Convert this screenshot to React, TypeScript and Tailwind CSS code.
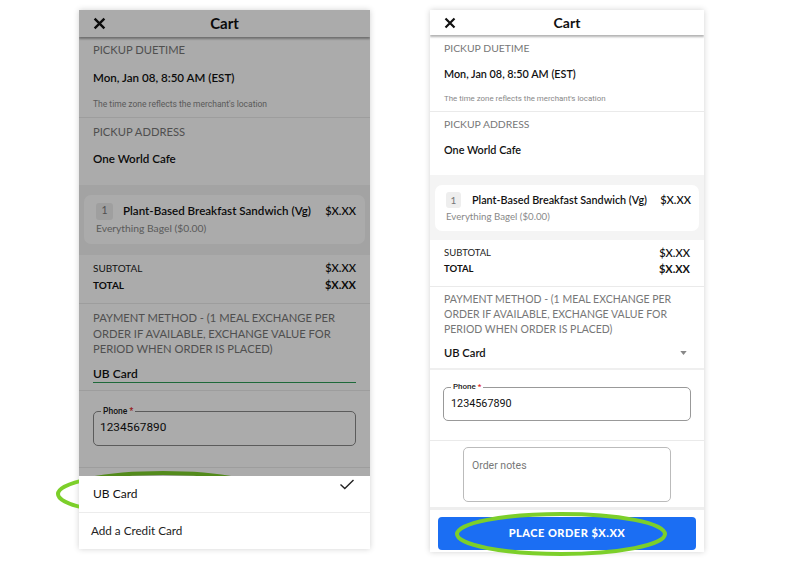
import React from "react";

function XIcon({ size }: { size: number }) {
  return (
    <svg width={size} height={size} viewBox="0 0 12 12" fill="none">
      <path d="M1.5 1.5 L10.5 10.5 M10.5 1.5 L1.5 10.5" stroke="#111" strokeWidth="2.2" strokeLinecap="butt" />
    </svg>
  );
}

function LeftPhone() {
  return (
    <div className="relative w-[291px] h-[539px] shrink-0 overflow-hidden bg-white shadow-[0_0_6px_rgba(0,0,0,0.18)]">
      <div className="relative z-10 grid h-[27px] grid-cols-[40px_1fr_40px] items-center bg-white shadow-[0_2px_2px_rgba(0,0,0,0.35)]">
        <div className="pl-[14px] flex items-center">
          <XIcon size={13} />
        </div>
        <div className="text-center text-[15px] font-bold text-[#111]">Cart</div>
        <div />
      </div>
      <div className="border-b border-[#eaeaea] px-[14px]">
        <div className="flex h-[27px] items-center text-[11.2px] text-[#777]">PICKUP DUETIME</div>
        <div className="flex h-[28px] items-center text-[11.6px] font-semibold text-[#111]">Mon, Jan 08, 8:50 AM (EST)</div>
        <div className="flex h-[25px] items-center whitespace-nowrap font-['Roboto',sans-serif] text-[8.5px] text-[#888]">The time zone reflects the merchant's location</div>
      </div>
      <div className="px-[14px] pb-[13px]">
        <div className="flex h-[28px] items-center text-[11.2px] text-[#777]">PICKUP ADDRESS</div>
        <div className="flex h-[26px] items-center text-[11.6px] font-semibold text-[#111]">One World Cafe</div>
      </div>
      <div className="bg-[#f4f4f4] px-[5px] pt-[10px] pb-[11px]">
        <div className="h-[49px] rounded-[7px] bg-white pt-[7px] pr-[9px] pl-[12px]">
          <div className="flex h-[18px] items-center whitespace-nowrap">
            <div className="flex h-[17px] w-[17px] items-center justify-center rounded-[3px] bg-[#eeeeee] text-[10.5px] text-[#777]">1</div>
            <div className="ml-[10px] flex-1 text-[11.6px] font-semibold text-[#111]">Plant-Based Breakfast Sandwich (Vg)</div>
            <div className="text-[11px] font-semibold text-[#111]">$X.XX</div>
          </div>
          <div className="mt-[2px] flex h-[14px] items-center text-[10.3px] text-[#888]">Everything Bagel ($0.00)</div>
        </div>
      </div>
      <div className="border-b border-[#eaeaea] px-[14px] pt-[5px] pb-[9px]">
        <div className="flex h-[17px] items-center justify-between">
          <span className="text-[10px] text-[#222]">SUBTOTAL</span>
          <span className="text-[11px] font-semibold text-[#111]">$X.XX</span>
        </div>
        <div className="flex h-[17px] items-center justify-between">
          <span className="text-[10px] font-bold text-[#111]">TOTAL</span>
          <span className="text-[11px] font-bold text-[#111]">$X.XX</span>
        </div>
      </div>
      <div className="border-b border-[#eaeaea] px-[14px] pt-[6px] pb-[7px]">
        <div className="whitespace-nowrap text-[11.2px] leading-[15.5px] text-[#777]">
          PAYMENT METHOD - (1 MEAL EXCHANGE PER
          <br />
          ORDER IF AVAILABLE, EXCHANGE VALUE FOR
          <br />
          PERIOD WHEN ORDER IS PLACED)
        </div>
        <div className="mt-[9px] flex h-[17px] items-center border-b-[1.5px] border-[#2e9d57] text-[12px] font-semibold text-[#111]">UB Card</div>
      </div>
      <div className="border-b border-[#eaeaea] px-[14px] pt-[20px] pb-[21px]">
        <div className="relative h-[35px] rounded-[5px] border border-[#888] pl-[6px] flex items-center">
          <div className="absolute left-[7px] top-[-6px] bg-white px-[2px] font-['Roboto',sans-serif] text-[8.5px] font-medium leading-[10px] text-[#222]">
            Phone <span className="text-[#e02020]">*</span>
          </div>
          <span className="font-['Roboto',sans-serif] text-[11.8px] text-[#111]">1234567890</span>
        </div>
      </div>
      <div className="absolute inset-0 z-20 bg-black/[0.33]" />
      <div className="absolute bottom-0 left-0 right-0 z-30 h-[73px] bg-white">
        <div className="relative flex h-[37px] items-center border-b border-[#ececec] pl-[14px] text-[12px] text-[#111]">
          UB Card
          <svg className="absolute right-[15px] top-[3px]" width="16" height="11" viewBox="0 0 16 11" fill="none">
            <path d="M1.5 5.5 L5.8 9.5 L14.5 1" stroke="#222" strokeWidth="1.4" />
          </svg>
        </div>
        <div className="flex h-[35px] items-center pl-[12px] text-[11.7px] text-[#222]">Add a Credit Card</div>
      </div>
    </div>
  );
}

function RightPhone() {
  return (
    <div className="relative w-[274px] h-[542px] shrink-0 overflow-hidden bg-white shadow-[0_0_6px_rgba(0,0,0,0.18)]">
      <div className="relative z-10 grid h-[25px] grid-cols-[40px_1fr_40px] items-center bg-white shadow-[0_2px_2px_rgba(0,0,0,0.3)]">
        <div className="pl-[14px] flex items-center">
          <XIcon size={12} />
        </div>
        <div className="text-center text-[14px] font-bold text-[#111]">Cart</div>
        <div />
      </div>
      <div className="border-b border-[#eaeaea] px-[14px] pt-[1px]">
        <div className="flex h-[26px] items-center text-[10.4px] text-[#777]">PICKUP DUETIME</div>
        <div className="flex h-[24px] items-center text-[10.8px] font-semibold text-[#111]">Mon, Jan 08, 8:50 AM (EST)</div>
        <div className="flex h-[25px] items-center whitespace-nowrap font-['Roboto',sans-serif] text-[7.9px] text-[#888]">The time zone reflects the merchant's location</div>
      </div>
      <div className="px-[14px] pb-[12px]">
        <div className="flex h-[26px] items-center text-[10.4px] text-[#777]">PICKUP ADDRESS</div>
        <div className="flex h-[25px] items-center text-[10.8px] font-semibold text-[#111]">One World Cafe</div>
      </div>
      <div className="bg-[#f4f4f4] px-[5px] pt-[10px] pb-[9px]">
        <div className="h-[46px] rounded-[7px] bg-white pt-[7px] pr-[8px] pl-[11px]">
          <div className="flex h-[16px] items-center whitespace-nowrap">
            <div className="flex h-[16px] w-[15px] items-center justify-center rounded-[3px] bg-[#eeeeee] text-[10px] text-[#777]">1</div>
            <div className="ml-[11px] flex-1 text-[10.8px] font-semibold text-[#111]">Plant-Based Breakfast Sandwich (Vg)</div>
            <div className="text-[11px] font-semibold text-[#111]">$X.XX</div>
          </div>
          <div className="mt-[2px] flex h-[13px] items-center text-[9.7px] text-[#888]">Everything Bagel ($0.00)</div>
        </div>
      </div>
      <div className="border-b border-[#eaeaea] px-[14px] pt-[5px] pb-[9px]">
        <div className="flex h-[16px] items-center justify-between">
          <span className="text-[9.5px] text-[#222]">SUBTOTAL</span>
          <span className="text-[11px] font-semibold text-[#111]">$X.XX</span>
        </div>
        <div className="flex h-[16px] items-center justify-between">
          <span className="text-[9.5px] font-bold text-[#111]">TOTAL</span>
          <span className="text-[11px] font-bold text-[#111]">$X.XX</span>
        </div>
      </div>
      <div className="border-b-2 border-[#efefef] px-[14px] pt-[5px] pb-[7px]">
        <div className="whitespace-nowrap text-[10.5px] leading-[15px] text-[#777]">
          PAYMENT METHOD - (1 MEAL EXCHANGE PER
          <br />
          ORDER IF AVAILABLE, EXCHANGE VALUE FOR
          <br />
          PERIOD WHEN ORDER IS PLACED)
        </div>
        <div className="mt-[8px] flex h-[16px] items-center justify-between text-[11.2px] font-semibold text-[#111]">
          UB Card
          <svg width="7" height="4" viewBox="0 0 8 5" className="mr-[3px]">
            <path d="M0 0 L8 0 L4 5 Z" fill="#888" />
          </svg>
        </div>
      </div>
      <div className="border-b border-[#eaeaea] px-[13px] pt-[17px] pb-[19px]">
        <div className="relative flex h-[34px] items-center rounded-[5px] border border-[#999] pl-[7px]">
          <div className="absolute left-[7px] top-[-6px] bg-white px-[2px] font-['Roboto',sans-serif] text-[8px] font-medium leading-[10px] text-[#222]">
            Phone <span className="text-[#e02020]">*</span>
          </div>
          <span className="font-['Roboto',sans-serif] text-[10.8px] text-[#111]">1234567890</span>
        </div>
      </div>
      <div className="flex justify-center border-b-[3px] border-[#eeeeee] pt-[6px] pb-[5px]">
        <div className="h-[55px] w-[208px] rounded-[5px] border border-[#bbb] pl-[8px] pt-[10px] font-['Roboto',sans-serif] text-[10.5px] text-[#777]">
          Order notes
        </div>
      </div>
      <div className="px-[8px] pt-[7px]">
        <div className="flex h-[33px] items-center justify-center rounded-[4px] bg-[#1b6ef3] whitespace-nowrap text-[11px] font-black tracking-[0.5px] text-white">
          PLACE ORDER $X.XX
        </div>
      </div>
    </div>
  );
}

export default function App() {
  return (
    <div className="relative h-[568px] w-[800px] overflow-hidden bg-white font-['Lato','Open_Sans',sans-serif]">
      <div className="flex items-start gap-[60px] pl-[79px] pt-[10px]">
        <LeftPhone />
        <RightPhone />
      </div>
      <svg className="pointer-events-none absolute left-0 top-0" width="800" height="568">
        <ellipse cx="163" cy="494" rx="105" ry="21" fill="none" stroke="#7ccf2a" strokeWidth="4" />
        <ellipse cx="561" cy="534" rx="104" ry="20" fill="none" stroke="#7ccf2a" strokeWidth="4" />
      </svg>
    </div>
  );
}
